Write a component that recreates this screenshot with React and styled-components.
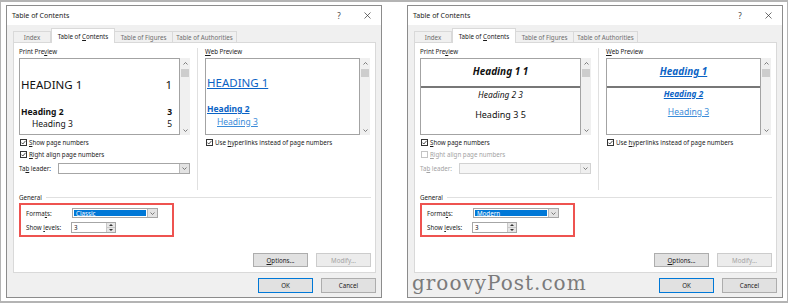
import React from 'react';
import styled, { createGlobalStyle } from 'styled-components';

const GlobalStyle = createGlobalStyle`
  html, body {
    margin: 0;
    padding: 0;
    background: #fff;
  }
  body {
    font-family: "Noto Sans", "Open Sans", sans-serif;
    color: #1b1b1b;
  }
  u {
    text-decoration-thickness: 0.5px;
    text-underline-offset: 1px;
  }
`;

const Frame = styled.div`
  box-sizing: border-box;
  width: 788px;
  height: 303px;
  border: solid #b4b4b4;
  border-width: 2px 1px 2px 1px;
  padding: 3px 0 0 5px;
  display: flex;
  gap: 25px;
  background: #fff;
`;

const Dialog = styled.section`
  position: relative;
  box-sizing: border-box;
  width: 376px;
  height: 293px;
  border: 1px solid #8c8c8c;
  background: #f0f0f0;
  display: flex;
  flex-direction: column;
`;

const TitleBar = styled.header`
  display: flex;
  align-items: center;
  height: 19px;
  padding-left: 5px;
  background: #fff;
  font-size: 7px;
`;

const TitleText = styled.span`
  flex: 1;
`;

const TitleButton = styled.span`
  width: 28px;
  display: flex;
  justify-content: center;
  align-items: center;
  font-size: 8px;
  color: #444;
`;

const Body = styled.div`
  flex: 1;
  display: flex;
  flex-direction: column;
  padding: 3px 5px 4px 6px;
`;

const TabRow = styled.div`
  display: flex;
  align-items: flex-end;
  height: 14px;
`;

const Tab = styled.div`
  position: relative;
  z-index: ${(p) => (p.$active ? 1 : 0)};
  box-sizing: border-box;
  width: ${(p) => p.$w}px;
  height: ${(p) => (p.$active ? 15 : 11)}px;
  margin-bottom: ${(p) => (p.$active ? -1 : 0)}px;
  border: 1px solid #d9d9d9;
  border-bottom: none;
  border-left-width: ${(p) => (p.$first || p.$active ? 1 : 0)}px;
  background: ${(p) => (p.$active ? '#fff' : '#f0f0f0')};
  color: ${(p) => (p.$active ? '#1b1b1b' : '#6e6e6e')};
  font-size: 6.2px;
  display: flex;
  justify-content: center;
  align-items: center;
  white-space: nowrap;
`;

const Panel = styled.div`
  box-sizing: border-box;
  height: 231px;
  border: 1px solid #d9d9d9;
  background: #fff;
  padding: 4px 4px 5px 5px;
  display: flex;
  flex-direction: column;
`;

const Columns = styled.div`
  display: flex;
  height: 143px;
`;

const Column = styled.div`
  width: ${(p) => p.$w}px;
  display: flex;
  flex-direction: column;
`;

const Divider = styled.div`
  width: 1px;
  margin: 1px 7px 0;
  background: #e0e0e0;
`;

const GroupLabel = styled.div`
  height: 10px;
  line-height: 10px;
  margin-bottom: 1px;
  font-size: 6.2px;
`;

const PreviewRow = styled.div`
  display: flex;
  height: 77px;
`;

const PreviewArea = styled.div`
  flex: 1;
  box-sizing: border-box;
  border: 1px solid #a3a3a3;
  background: #fff;
  padding: ${(p) => p.$pad};
  overflow: hidden;
`;

const ScrollBar = styled.div`
  width: 10px;
  background: #f0f0f0;
  display: flex;
  flex-direction: column;
  align-items: center;
`;

const ScrollArrow = styled.div`
  height: 10px;
  display: flex;
  align-items: center;
  justify-content: center;
`;

const ScrollThumb = styled.div`
  width: 8px;
  height: 8px;
  margin-top: 1px;
  background: #cdcdcd;
`;

const ScrollSpacer = styled.div`
  flex: 1;
`;

const Entry = styled.div`
  display: flex;
  justify-content: ${(p) => (p.$center ? 'center' : 'space-between')};
  height: ${(p) => p.$lh}px;
  line-height: ${(p) => p.$lh}px;
  margin-top: ${(p) => p.$mt || 0}px;
  padding-left: ${(p) => p.$indent || 0}px;
  font-size: ${(p) => p.$size}px;
  font-weight: ${(p) => (p.$bold ? 700 : 400)};
  font-style: ${(p) => (p.$italic ? 'italic' : 'normal')};
  color: ${(p) => p.$color || '#111'};
  white-space: nowrap;
`;

const EntryText = styled.span`
  text-decoration: ${(p) => (p.$link ? 'underline' : 'none')};
  text-decoration-thickness: 1px;
  text-underline-offset: 1px;
`;

const Rule = styled.div`
  height: 2px;
  margin-top: ${(p) => p.$mt}px;
  background: #777;
`;

const CheckRow = styled.label`
  display: flex;
  align-items: center;
  gap: 2px;
  height: 12px;
  margin-top: ${(p) => p.$mt || 0}px;
  padding-left: 1px;
  font-size: 6.2px;
  color: ${(p) => (p.$disabled ? '#a3a3a3' : '#1b1b1b')};
`;

const CheckBox = styled.span`
  box-sizing: border-box;
  width: 7px;
  height: 7px;
  border: 1px solid ${(p) => (p.$disabled ? '#c4c4c4' : '#333')};
  background: #fff;
  display: flex;
  align-items: center;
  justify-content: center;
`;

const LeaderRow = styled.div`
  display: flex;
  align-items: center;
  height: 11px;
  margin-top: 3px;
  font-size: 6.2px;
  color: ${(p) => (p.$disabled ? '#a3a3a3' : '#1b1b1b')};
`;

const FieldLabel = styled.span`
  width: ${(p) => p.$w}px;
  flex-shrink: 0;
  font-size: 6.2px;
  white-space: nowrap;
`;

const Select = styled.div`
  box-sizing: border-box;
  display: flex;
  width: ${(p) => (p.$w ? `${p.$w}px` : 'auto')};
  flex: ${(p) => (p.$w ? 'none' : 1)};
  height: 100%;
  border: 1px solid ${(p) => (p.$disabled ? '#d2d2d2' : '#a6a6a6')};
  background: ${(p) => (p.$disabled ? '#f6f6f6' : '#fff')};
`;

const SelectValue = styled.span`
  flex: 1;
  margin: 1px;
  padding-left: 2px;
  font-size: 6.2px;
  line-height: 7px;
  background: ${(p) => (p.$selected ? '#0078d7' : 'transparent')};
  color: ${(p) => (p.$selected ? '#fff' : '#111')};
`;

const SelectArrow = styled.span`
  width: 9px;
  border-left: 1px solid ${(p) => (p.$disabled ? '#dadada' : '#b9b9b9')};
  background: ${(p) => (p.$disabled ? '#efefef' : '#e3e3e3')};
  display: flex;
  align-items: center;
  justify-content: center;
`;

const GeneralHeader = styled.div`
  display: flex;
  align-items: center;
  height: 10px;
  margin-top: 2px;
  font-size: 6.2px;
`;

const HeaderLine = styled.span`
  flex: 1;
  height: 1px;
  margin-left: 4px;
  background: #e0e0e0;
`;

const Highlight = styled.div`
  box-sizing: border-box;
  width: 155px;
  height: 34px;
  margin-top: 1px;
  border: 2px solid #ee5350;
  padding: 3px 0 2px 5px;
  display: flex;
  flex-direction: column;
  gap: 4px;
`;

const FieldRow = styled.div`
  display: flex;
  align-items: center;
  height: ${(p) => p.$h}px;
`;

const Spin = styled.div`
  box-sizing: border-box;
  display: flex;
  width: 45px;
  height: 100%;
  border: 1px solid #a6a6a6;
  background: #fff;
`;

const SpinValue = styled.span`
  flex: 1;
  padding-left: 2px;
  font-size: 6.2px;
  line-height: 9px;
`;

const SpinButtons = styled.span`
  width: 8px;
  display: flex;
  flex-direction: column;
  border-left: 1px solid #c8c8c8;
`;

const SpinHalf = styled.span`
  flex: 1;
  background: #e6e6e6;
  display: flex;
  align-items: center;
  justify-content: center;
  & + & {
    border-top: 1px solid #c8c8c8;
  }
`;

const ButtonRow = styled.div`
  display: flex;
  justify-content: flex-end;
  gap: 8px;
  margin-top: ${(p) => (p.$auto ? 'auto' : `${p.$mt}px`)};
  padding-right: ${(p) => p.$pr || 0}px;
`;

const Button = styled.button`
  box-sizing: border-box;
  width: 55px;
  height: ${(p) => p.$h}px;
  padding: 0;
  border: 1px solid ${(p) => (p.$primary ? '#0078d7' : p.$disabled ? '#cccccc' : '#adadad')};
  background: ${(p) => (p.$disabled ? '#ececec' : '#e1e1e1')};
  color: ${(p) => (p.$disabled ? '#a3a3a3' : '#1b1b1b')};
  font-family: inherit;
  font-size: 6.2px;
`;

const Watermark = styled.span`
  position: absolute;
  left: 4px;
  top: 267px;
  font-family: "DejaVu Serif", "Liberation Serif", serif;
  font-size: 20px;
  line-height: 20px;
  letter-spacing: 1px;
  color: #7b7b7b;
  pointer-events: none;
`;

const Chevron = ({ up }) => (
  <svg width="5" height="3" viewBox="0 0 5 3">
    <polyline
      points={up ? '0.5,2.5 2.5,0.5 4.5,2.5' : '0.5,0.5 2.5,2.5 4.5,0.5'}
      fill="none"
      stroke="#606060"
      strokeWidth="0.8"
    />
  </svg>
);

const Triangle = ({ up }) => (
  <svg width="4" height="2" viewBox="0 0 4 2">
    <polygon points={up ? '0,2 2,0 4,2' : '0,0 2,2 4,0'} fill="#333" />
  </svg>
);

const Tick = () => (
  <svg width="5" height="5" viewBox="0 0 5 5">
    <polyline points="0.4,2.6 1.8,4 4.6,0.8" fill="none" stroke="#222" strokeWidth="0.8" />
  </svg>
);

const CloseIcon = () => (
  <svg width="7" height="7" viewBox="0 0 7 7">
    <path d="M0.5 0.5 L6.5 6.5 M6.5 0.5 L0.5 6.5" stroke="#333" strokeWidth="0.7" />
  </svg>
);

const TABS = [
  { key: 'index', label: 'Index', w: 38 },
  { key: 'toc', label: <>Table of <u>C</u>ontents</>, w: 64, active: true },
  { key: 'tof', label: 'Table of Figures', w: 58 },
  { key: 'toa', label: 'Table of Authorities', w: 64 },
];

const LINK = '#0b63c5';
const LINK_LIGHT = '#3b8bd8';

const Scroll = () => (
  <ScrollBar>
    <ScrollArrow><Chevron up /></ScrollArrow>
    <ScrollThumb />
    <ScrollSpacer />
    <ScrollArrow><Chevron /></ScrollArrow>
  </ScrollBar>
);

const PrintPreview = ({ modern }) =>
  modern ? (
    <PreviewArea $pad="6px 0 0 0">
      <Entry $center $size={10} $lh={13} $bold $italic>Heading 1 1</Entry>
      <Rule $mt={8} />
      <Entry $center $size={8.4} $lh={11} $mt={1} $italic>Heading 2 3</Entry>
      <Entry $center $size={9} $lh={12} $mt={9}>Heading 3 5</Entry>
    </PreviewArea>
  ) : (
    <PreviewArea $pad="19px 7px 0 1px">
      <Entry $size={11.5} $lh={14}><span>HEADING 1</span><span>1</span></Entry>
      <Entry $size={8.5} $lh={12} $mt={14} $bold><span>Heading 2</span><span>3</span></Entry>
      <Entry $size={8.5} $lh={12} $indent={11}><span>Heading 3</span><span>5</span></Entry>
    </PreviewArea>
  );

const WebPreview = ({ modern }) =>
  modern ? (
    <PreviewArea $pad="6px 0 0 0">
      <Entry $center $size={10} $lh={13} $bold $italic $color={LINK}>
        <EntryText $link>Heading 1</EntryText>
      </Entry>
      <Rule $mt={8} />
      <Entry $center $size={8.3} $lh={11} $bold $italic $color={LINK}>
        <EntryText $link>Heading 2</EntryText>
      </Entry>
      <Entry $center $size={8.6} $lh={12} $mt={7} $indent={10} $color={LINK_LIGHT}>
        <EntryText $link>Heading 3</EntryText>
      </Entry>
    </PreviewArea>
  ) : (
    <PreviewArea $pad="17px 0 0 1px">
      <Entry $size={11.5} $lh={14} $color={LINK}>
        <EntryText $link>HEADING 1</EntryText>
      </Entry>
      <Entry $size={8.5} $lh={12} $mt={13} $bold $color={LINK}>
        <EntryText $link>Heading 2</EntryText>
      </Entry>
      <Entry $size={8.5} $lh={12} $mt={1} $indent={10} $color={LINK_LIGHT}>
        <EntryText $link>Heading 3</EntryText>
      </Entry>
    </PreviewArea>
  );

const Check = ({ checked, disabled, mt, children }) => (
  <CheckRow $disabled={disabled} $mt={mt}>
    <CheckBox $disabled={disabled}>{checked && <Tick />}</CheckBox>
    <span>{children}</span>
  </CheckRow>
);

const TocDialog = ({ modern }) => (
  <Dialog>
    <TitleBar>
      <TitleText>Table of Contents</TitleText>
      <TitleButton>?</TitleButton>
      <TitleButton><CloseIcon /></TitleButton>
    </TitleBar>
    <Body>
      <TabRow>
        {TABS.map((t, i) => (
          <Tab key={t.key} $w={t.w} $active={t.active} $first={i === 0}>
            <span>{t.label}</span>
          </Tab>
        ))}
      </TabRow>
      <Panel>
        <Columns>
          <Column $w={171}>
            <GroupLabel>Print Pre<u>v</u>iew</GroupLabel>
            <PreviewRow>
              <PrintPreview modern={modern} />
              <Scroll />
            </PreviewRow>
            <Check checked mt={1}><u>S</u>how page numbers</Check>
            <Check checked={!modern} disabled={modern}><u>R</u>ight align page numbers</Check>
            <LeaderRow $disabled={modern}>
              <FieldLabel $w={39}>Ta<u>b</u> leader:</FieldLabel>
              <Select $disabled={modern}>
                <SelectValue />
                <SelectArrow $disabled={modern}><Chevron /></SelectArrow>
              </Select>
            </LeaderRow>
          </Column>
          <Divider />
          <Column $w={165}>
            <GroupLabel><u>W</u>eb Preview</GroupLabel>
            <PreviewRow>
              <WebPreview modern={modern} />
              <Scroll />
            </PreviewRow>
            <Check checked mt={1}>Use <u>h</u>yperlinks instead of page numbers</Check>
          </Column>
        </Columns>
        <GeneralHeader>
          <span>General</span>
          <HeaderLine />
        </GeneralHeader>
        <Highlight>
          <FieldRow $h={10}>
            <FieldLabel $w={46}>Forma<u>t</u>s:</FieldLabel>
            <Select $w={86}>
              <SelectValue $selected>{modern ? 'Modern' : 'Classic'}</SelectValue>
              <SelectArrow><Chevron /></SelectArrow>
            </Select>
          </FieldRow>
          <FieldRow $h={11}>
            <FieldLabel $w={45}>Show <u>l</u>evels:</FieldLabel>
            <Spin>
              <SpinValue>3</SpinValue>
              <SpinButtons>
                <SpinHalf><Triangle up /></SpinHalf>
                <SpinHalf><Triangle /></SpinHalf>
              </SpinButtons>
            </Spin>
          </FieldRow>
        </Highlight>
        <ButtonRow $auto>
          <Button $h={14}><u>O</u>ptions...</Button>
          <Button $h={14} $disabled>Modify...</Button>
        </ButtonRow>
      </Panel>
      <ButtonRow $mt={5} $pr={-1}>
        <Button $h={15} $primary>OK</Button>
        <Button $h={15}>Cancel</Button>
      </ButtonRow>
    </Body>
    {modern && <Watermark>groovyPost.com</Watermark>}
  </Dialog>
);

const App = () => (
  <>
    <GlobalStyle />
    <Frame>
      <TocDialog />
      <TocDialog modern />
    </Frame>
  </>
);

export default App;
